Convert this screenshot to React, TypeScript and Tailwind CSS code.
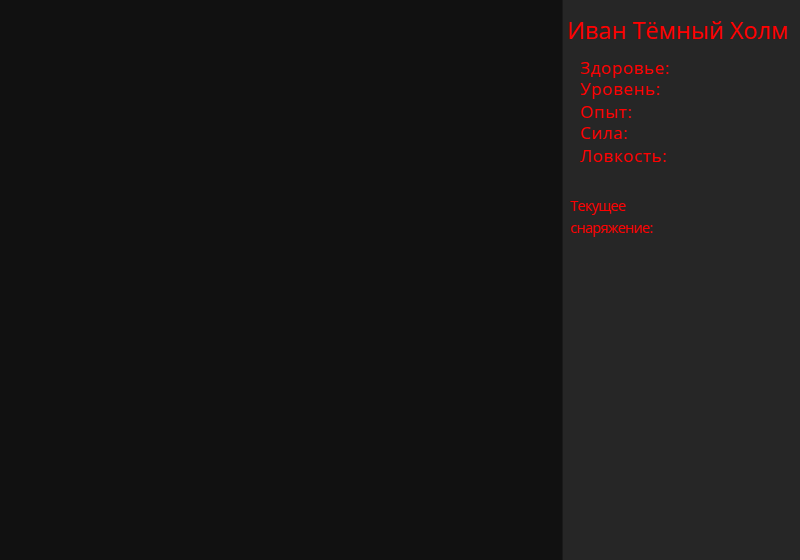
export default function App() {
  const stats = [
    { label: "Здоровье:", mt: "mt-0" },
    { label: "Уровень:", mt: "mt-0" },
    { label: "Опыт:", mt: "mt-[2px]" },
    { label: "Сила:", mt: "mt-0" },
    { label: "Ловкость:", mt: "mt-[2px]" },
  ]

  return (
    <div className="flex h-[560px] w-[800px] bg-[#111111] font-['Open_Sans',sans-serif] text-[#ff0000]">
      {/* игровое поле */}
      <div className="flex-1" />

      {/* панель персонажа */}
      <aside className="w-[238px] bg-[#262626] border-l border-[#1a1a1a] pl-[4px] pt-[14px]">
        <h1 className="text-[23.5px] leading-[32px] whitespace-nowrap">Иван Тёмный Холм</h1>
        <div className="mt-[11px] pl-[13px] text-[17px] font-medium leading-[21px] tracking-[0.035em]">
          {stats.map((s) => (
            <p key={s.label} className={s.mt}>{s.label}</p>
          ))}
        </div>
        <p className="mt-[29px] ml-[3px] w-[100px] text-[14.5px] font-medium leading-[22px] tracking-[-0.05em]">
          Текущее снаряжение:
        </p>
      </aside>
    </div>
  )
}
